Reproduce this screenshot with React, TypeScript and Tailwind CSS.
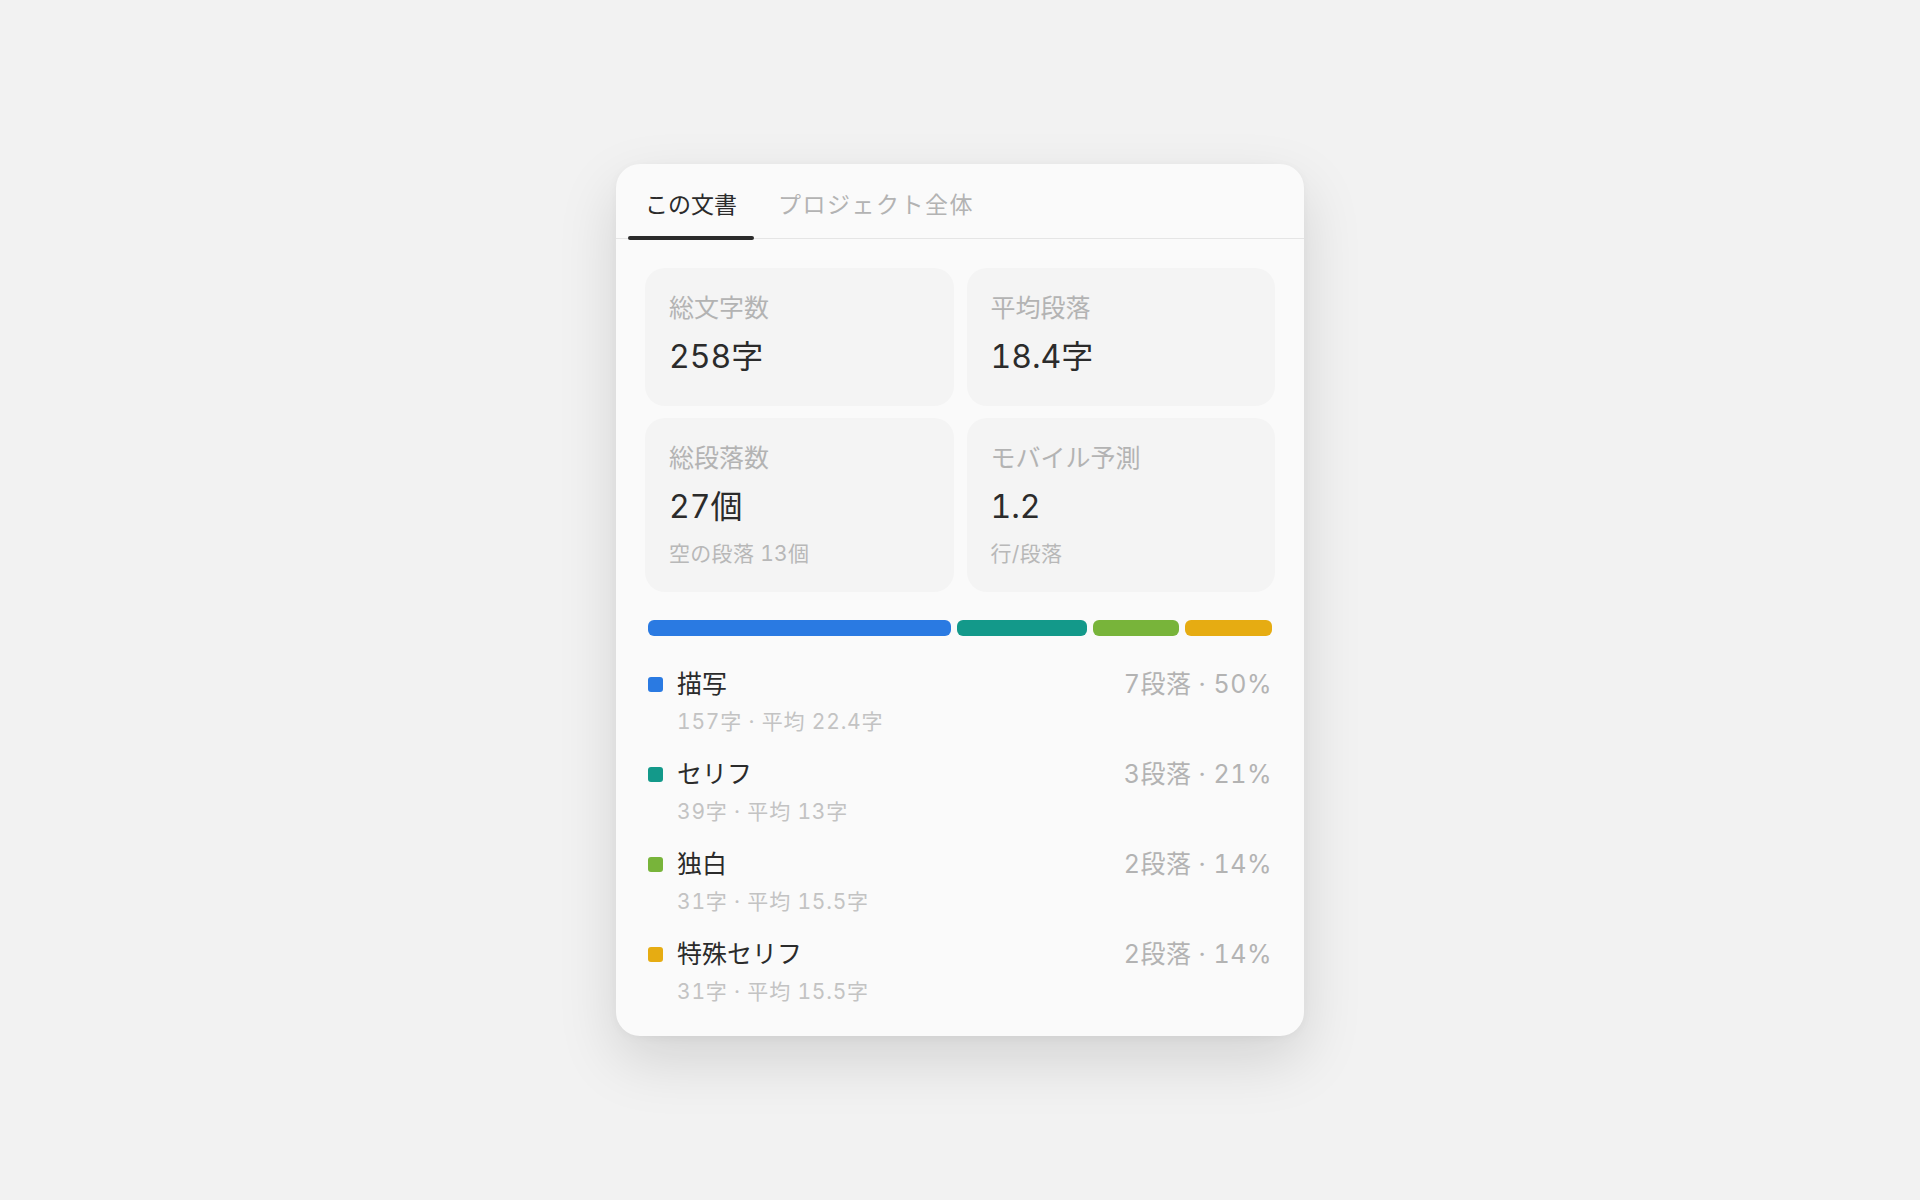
import React from "react";

const stats = [
  { label: "総文字数", value: "258字", sub: "" },
  { label: "平均段落", value: "18.4字", sub: "" },
  { label: "総段落数", value: "27個", sub: "空の段落 13個" },
  { label: "モバイル予測", value: "1.2", sub: "行/段落" },
];

const cats = [
  { name: "描写", count: 7, right: "7段落 · 50%", sub: "157字 · 平均 22.4字", bar: "bg-[#2a7ae2]" },
  { name: "セリフ", count: 3, right: "3段落 · 21%", sub: "39字 · 平均 13字", bar: "bg-[#13998a]" },
  { name: "独白", count: 2, right: "2段落 · 14%", sub: "31字 · 平均 15.5字", bar: "bg-[#78b43a]" },
  { name: "特殊セリフ", count: 2, right: "2段落 · 14%", sub: "31字 · 平均 15.5字", bar: "bg-[#e6ac12]" },
];

export default function App() {
  return (
    <div className="flex h-screen w-full items-center justify-center bg-[#f2f2f2] font-['Inter','Noto_Sans_CJK_JP',sans-serif] tabular-nums">
      <div className="w-[688px] overflow-hidden rounded-[24px] bg-[#fafafa] shadow-[0_24px_60px_rgba(0,0,0,0.13),0_2px_10px_rgba(0,0,0,0.04)]">
        <div className="flex gap-2 border-b border-[#e5e5e5] pl-3">
          <div className="relative px-[17px] pb-[18px] pt-[26px] text-[23px] leading-[30px] text-[#2b2b2b]">
            この文書
            <div className="absolute bottom-[-2px] left-0 right-0 h-[4px] rounded-full bg-[#2b2b2b]" />
          </div>
          <div className="relative px-[16px] pb-[18px] pt-[26px] text-[23px] leading-[30px] tracking-[1.5px] text-[#b3b3b3]">
            プロジェクト全体
          </div>
        </div>
        <div className="px-[29px] pb-[30px] pt-[29px]">
          <div className="grid grid-cols-2 gap-x-[13px] gap-y-[12px] items-start">
            {stats.map((s) => (
              <div
                key={s.label}
                className={`rounded-[20px] bg-[#f4f4f4] pl-[24px] pt-[23px] ${s.sub ? "pb-[23px]" : "pb-[28px]"}`}
              >
                <div className="text-[25px] leading-[34px] text-[#b3b3b3]">{s.label}</div>
                <div className="mt-[11px] text-[32px] leading-[42px] text-[#2b2b2b]">{s.value}</div>
                {s.sub && (
                  <div className="mt-[11px] text-[21px] leading-[30px] tracking-[0.3px] text-[#b8b8b8]">{s.sub}</div>
                )}
              </div>
            ))}
          </div>
          <div className="px-[3px]">
            <div className="mt-[28px] flex h-[16px] gap-[6px]">
              {cats.map((c) => (
                <div key={c.name} className={`h-full rounded-[6px] ${c.bar}`} style={{ flexGrow: c.count, flexBasis: 0 }} />
              ))}
            </div>
            <div className="mt-[30px] flex flex-col gap-[20px]">
              {cats.map((c) => (
                <div key={c.name}>
                  <div className="flex items-center justify-between">
                    <div className="flex items-center gap-[14px]">
                      <div className={`h-[15px] w-[15px] rounded-[3px] ${c.bar}`} />
                      <div className="text-[25px] leading-[36px] text-[#2b2b2b]">{c.name}</div>
                    </div>
                    <div className="text-[25px] leading-[36px] tracking-[0.5px] text-[#b3b3b3]">{c.right}</div>
                  </div>
                  <div className="mt-[6px] pl-[29px] text-[21px] leading-[28px] tracking-[0.8px] text-[#c3c3c3]">{c.sub}</div>
                </div>
              ))}
            </div>
          </div>
        </div>
      </div>
    </div>
  );
}
